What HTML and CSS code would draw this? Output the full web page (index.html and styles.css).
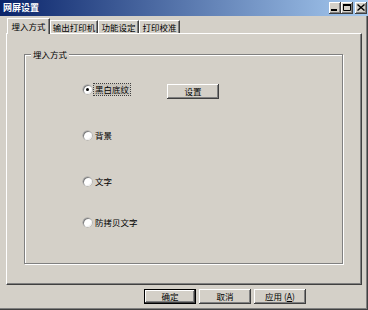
FILE: index.html
```html
<!DOCTYPE html>
<html lang="zh-CN">
<head>
    <meta charset="UTF-8">
    <title>网屏设置</title>
    <link rel="stylesheet" href="styles.css">
</head>
<body>
    <div class="window">
        <div class="titlebar">
            <span class="title">网屏设置</span>
            <div class="controls">
                <span class="ctl">
                    <svg width="8" height="7" viewBox="0 0 8 7"><rect x="0" y="5" width="6" height="2" fill="#000"/></svg>
                </span>
                <span class="ctl">
                    <svg width="8" height="7" viewBox="0 0 8 7"><path d="M0.5 0.5h7v6h-7z" fill="none" stroke="#000"/><rect x="0" y="0" width="8" height="2" fill="#000"/></svg>
                </span>
                <span class="ctl close">
                    <svg width="8" height="7" viewBox="0 0 8 7"><path d="M0.5 0.5l7 6M7.5 0.5l-7 6" stroke="#000" stroke-width="1.4"/></svg>
                </span>
            </div>
        </div>

        <div class="main">
            <div class="tabs">
                <div class="tab active">埋入方式</div>
                <div class="tab">输出打印机</div>
                <div class="tab">功能设定</div>
                <div class="tab">打印校准</div>
            </div>

            <div class="panel">
                <div class="group">
                    <span class="legend">埋入方式</span>

                    <div class="row row1">
                        <label class="radio">
                            <span class="dot checked"></span>
                            <span class="text focus">黑白底纹</span>
                        </label>
                        <button class="btn">设置</button>
                    </div>
                    <div class="row row2">
                        <label class="radio"><span class="dot"></span><span class="text">背景</span></label>
                    </div>
                    <div class="row row3">
                        <label class="radio"><span class="dot"></span><span class="text">文字</span></label>
                    </div>
                    <div class="row row4">
                        <label class="radio"><span class="dot"></span><span class="text">防拷贝文字</span></label>
                    </div>
                </div>
            </div>

            <div class="footer">
                <button class="btn default">确定</button>
                <button class="btn">取消</button>
                <button class="btn">应用 (<u>A</u>)</button>
            </div>
        </div>
    </div>
</body>
</html>
```

FILE: styles.css
```css
* {
    margin: 0;
    padding: 0;
    box-sizing: border-box;
}

body {
    font-family: "Noto Sans CJK SC", "DejaVu Sans", sans-serif;
    font-size: 8.5px;
    color: #000;
    background-color: #d4d0c8;
}

.window {
    width: 368px;
    height: 310px;
    background-color: #d4d0c8;
    box-shadow: inset -1px -1px 0 #404040, inset -2px -2px 0 #808080;
    display: flex;
    flex-direction: column;
}

/* barra de titulo */
.titlebar {
    height: 16px;
    background: linear-gradient(to right, #0a246a, #a6caf0);
    display: flex;
    align-items: center;
    justify-content: space-between;
    padding: 0 1px 0 3px;
}

.title {
    color: #fff;
    font-weight: bold;
    font-size: 9px;
    line-height: 16px;
}

.controls {
    display: flex;
}

.ctl {
    width: 12px;
    height: 12px;
    background-color: #d4d0c8;
    box-shadow: inset -1px -1px 0 #404040, inset 1px 1px 0 #fff, inset -2px -2px 0 #808080;
    display: flex;
    align-items: center;
    justify-content: center;
    padding: 0 1px 1px 0;
}

.ctl.close {
    margin-left: 2px;
}

.main {
    flex: 1;
    display: flex;
    flex-direction: column;
    padding: 2px 6px 0 6px;
}

/* abas */
.tabs {
    display: flex;
    align-items: flex-end;
    height: 15px;
    padding-left: 1px;
}

.tab {
    height: 13px;
    line-height: 12px;
    text-align: center;
    border-top: 1px solid #fff;
    border-left: 1px solid #fff;
    border-right: 1px solid #404040;
    box-shadow: inset -1px 0 0 #808080;
    white-space: nowrap;
    overflow: hidden;
}

.tab:nth-child(1) { width: 43px; }
.tab:nth-child(2) { width: 48px; }
.tab:nth-child(3) { width: 41px; }
.tab:nth-child(4) { width: 41px; }

.tab.active {
    height: 16px;
    margin-bottom: -1px;
    line-height: 14px;
    background-color: #d4d0c8;
    position: relative;
    z-index: 1;
}

.panel {
    height: 252px;
    border-top: 1px solid #fff;
    border-left: 1px solid #fff;
    border-right: 1px solid #404040;
    border-bottom: 1px solid #404040;
    box-shadow: inset -1px -1px 0 #808080;
    padding: 20px 0 0 17px;
}

/* grupo */
.group {
    width: 319px;
    height: 210px;
    border: 1px solid #808080;
    box-shadow: inset 1px 1px 0 #fff, 1px 1px 0 #fff;
    padding-left: 58px;
    display: flex;
    flex-direction: column;
    align-items: flex-start;
}

.legend {
    display: block;
    margin: -6px 0 0 -52px;
    padding: 0 2px;
    line-height: 11px;
    background-color: #d4d0c8;
}

.row {
    display: flex;
    align-items: flex-start;
}

.row1 { margin-top: 24px; }
.row2 { margin-top: 31px; }
.row3 { margin-top: 35px; }
.row4 { margin-top: 30px; }

.radio {
    display: flex;
    align-items: center;
    gap: 2px;
    height: 11px;
}

.row1 .radio {
    width: 84px;
}

.dot {
    width: 9px;
    height: 9px;
    border-radius: 50%;
    background-color: #fff;
    box-shadow: inset 1px 1px 0 #808080, inset -1px -1px 0 #f0f0f0, 0 0 0 0.5px #a0a0a0;
    display: flex;
    align-items: center;
    justify-content: center;
}

.dot.checked::after {
    content: "";
    width: 3px;
    height: 3px;
    border-radius: 50%;
    background-color: #000;
}

.text {
    line-height: 11px;
    padding: 0 1px;
}

.text.focus {
    outline: 1px dotted #404040;
    background-color: #c8c4bc;
}

/* botoes */
.btn {
    font-family: "Noto Sans CJK SC", "DejaVu Sans", sans-serif;
    font-size: 8.5px;
    width: 52px;
    height: 15px;
    line-height: 13px;
    background-color: #d4d0c8;
    border: none;
    box-shadow: inset -1px -1px 0 #404040, inset 1px 1px 0 #fff, inset -2px -2px 0 #808080;
    color: #000;
}

.btn.default {
    border: 1px solid #000;
    line-height: 11px;
}

.footer {
    display: flex;
    gap: 3px;
    margin-top: 4px;
    padding-left: 138px;
}
```
